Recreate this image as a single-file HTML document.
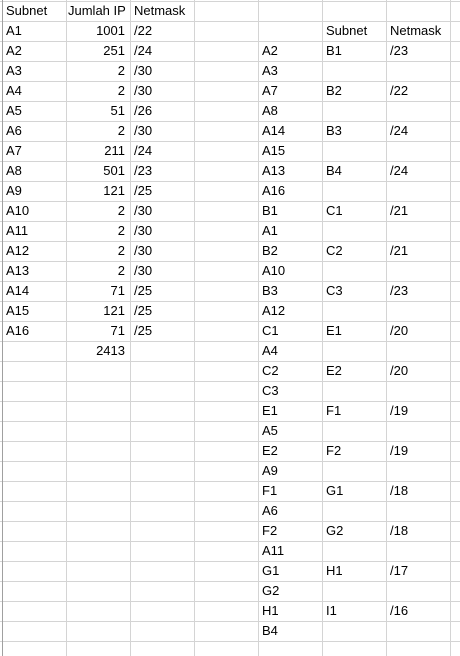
<!DOCTYPE html>
<html><head><meta charset="utf-8"><style>
html,body{margin:0;padding:0;width:460px;height:656px;overflow:hidden;background:#fff}
body{position:relative;font-family:"Liberation Sans",sans-serif;font-size:13px;color:#000;
background-image:
linear-gradient(to right,transparent 2px,transparent 2px),
repeating-linear-gradient(to right,transparent 0,transparent 63px,#d4d4d4 63px,#d4d4d4 64px),
repeating-linear-gradient(to bottom,#d4d4d4 0,#d4d4d4 1px,transparent 1px,transparent 20px);
background-position:0 0,3px 0,0 1px;}
.lb{position:absolute;left:2px;top:0;width:1px;height:656px;background:#a0a0a0}
.c{position:absolute;height:20px;line-height:20px;width:58px;white-space:nowrap}
.r{text-align:right}
</style></head><body>
<div class="lb"></div>
<div id="g"></div>
<script>
var H='';
function t(col,row,txt,right){var x=2+64*col;var y=1+20*row;
H+='<div class="c'+(right?' r':'')+'" style="left:'+(x+4)+'px;top:'+y+'px;'+(right?'width:57px;left:'+(x+2)+'px':'')+'">'+txt+'</div>';}
t(0,0,'Subnet');t(1,0,'Jumlah IP',1);t(2,0,'Netmask');
var L=[['A1',1001,22],['A2',251,24],['A3',2,30],['A4',2,30],['A5',51,26],['A6',2,30],['A7',211,24],['A8',501,23],['A9',121,25],['A10',2,30],['A11',2,30],['A12',2,30],['A13',2,30],['A14',71,25],['A15',121,25],['A16',71,25]];
L.forEach(function(a,i){t(0,i+1,a[0]);t(1,i+1,a[1],1);t(2,i+1,'/'+a[2]);});
t(1,17,'2413',1);
t(5,1,'Subnet');t(6,1,'Netmask');
var C='A2,A3,A7,A8,A14,A15,A13,A16,B1,A1,B2,A10,B3,A12,C1,A4,C2,C3,E1,A5,E2,A9,F1,A6,F2,A11,G1,G2,H1,B4'.split(',');
C.forEach(function(s,i){t(4,i+2,s);});
var R=[['B1',23],['B2',22],['B3',24],['B4',24],['C1',21],['C2',21],['C3',23],['E1',20],['E2',20],['F1',19],['F2',19],['G1',18],['G2',18],['H1',17],['I1',16]];
R.forEach(function(a,i){t(5,2+2*i,a[0]);t(6,2+2*i,'/'+a[1]);});
document.getElementById('g').innerHTML=H;
</script>
</body></html>
